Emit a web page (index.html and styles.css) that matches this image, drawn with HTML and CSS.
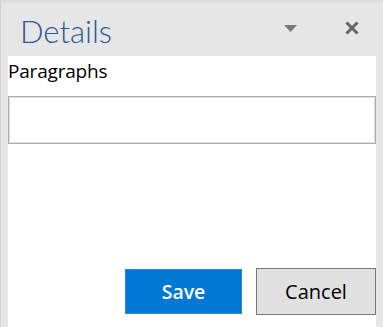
FILE: index.html
```html
<!DOCTYPE html>
<html lang="en">
<head>
<meta charset="UTF-8">
<meta name="viewport" content="width=device-width, initial-scale=1.0">
<title>Details</title>
<link rel="stylesheet" href="styles.css">
</head>
<body>

<div class="pane">
    <div class="pane-header">
        <h1>Details</h1>
        <button class="icon-button menu-button" title="Options">
            <svg width="13" height="7" viewBox="0 0 13 7"><path d="M0 0 H13 L6.5 7 Z" fill="#7a7a7a"/></svg>
        </button>
        <button class="icon-button close-button" title="Close">
            <svg width="14" height="14" viewBox="0 0 14 14"><path d="M1.5 1.5 L12.5 12.5 M12.5 1.5 L1.5 12.5" stroke="#666" stroke-width="3"/></svg>
        </button>
    </div>
    <div class="pane-body">
        <label for="paragraphs">Paragraphs</label>
        <input type="text" id="paragraphs" name="paragraphs">
        <div class="actions">
            <button class="btn btn-primary">Save</button>
            <button class="btn btn-default">Cancel</button>
        </div>
    </div>
</div>

</body>
</html>
```
FILE: styles.css
```css
html, body {
    margin: 0;
    padding: 0;
    height: 100%;
}

body {
    font-family: "Open Sans", "Noto Sans", sans-serif;
    background-color: #e6e6e6;
    overflow: hidden;
}

.pane {
    display: flex;
    flex-direction: column;
    height: 327px;
    border-left: 1px solid #d4d4d4;
    background: linear-gradient(#d9d9d9, #e6e6e6 4px);
}

.pane-header {
    display: flex;
    align-items: center;
    height: 56px;
    padding-left: 19px;
}

h1 {
    flex: 1;
    margin: 0;
    font-family: Lato, "Open Sans", sans-serif;
    font-size: 31px;
    font-weight: 300;
    color: #2b579a;
    line-height: 56px;
    padding-top: 3px;
    box-sizing: border-box;
    height: 56px;
}

.icon-button {
    border: none;
    background: none;
    padding: 0;
    display: flex;
    cursor: pointer;
}

.menu-button {
    margin-right: 48px;
    margin-top: 1px;
}

.close-button {
    margin-right: 24px;
}

.pane-body {
    flex: 1;
    display: flex;
    flex-direction: column;
    margin: 0 7px 0 7px;
    background-color: #fff;
}

label {
    font-size: 19px;
    color: #000;
    line-height: 24px;
    padding: 3px 0 13px 0;
    letter-spacing: -0.2px;
}

input[type="text"] {
    height: 48px;
    box-sizing: border-box;
    border: 1px solid #ababab;
    box-shadow: inset 0 0 0 1px #e3e3e3;
    margin: 0;
    padding: 0 8px;
    font-size: 16px;
    outline: none;
}

.actions {
    margin-top: auto;
    display: flex;
    justify-content: flex-end;
    align-items: center;
    gap: 14px;
    padding-bottom: 12px;
}

.btn {
    font-family: "Open Sans", "Noto Sans", sans-serif;
    font-size: 20px;
    cursor: pointer;
    box-sizing: border-box;
    padding: 0;
}

.btn-primary {
    width: 117px;
    height: 45px;
    border: 1px solid #2b88d8;
    background-color: #0078d4;
    color: #fff;
    font-weight: 600;
    font-size: 19.5px;
}

.btn-default {
    width: 120px;
    height: 47px;
    border: 1px solid #7a7a7a;
    background-color: #e1e1e1;
    color: #000;
}
```
